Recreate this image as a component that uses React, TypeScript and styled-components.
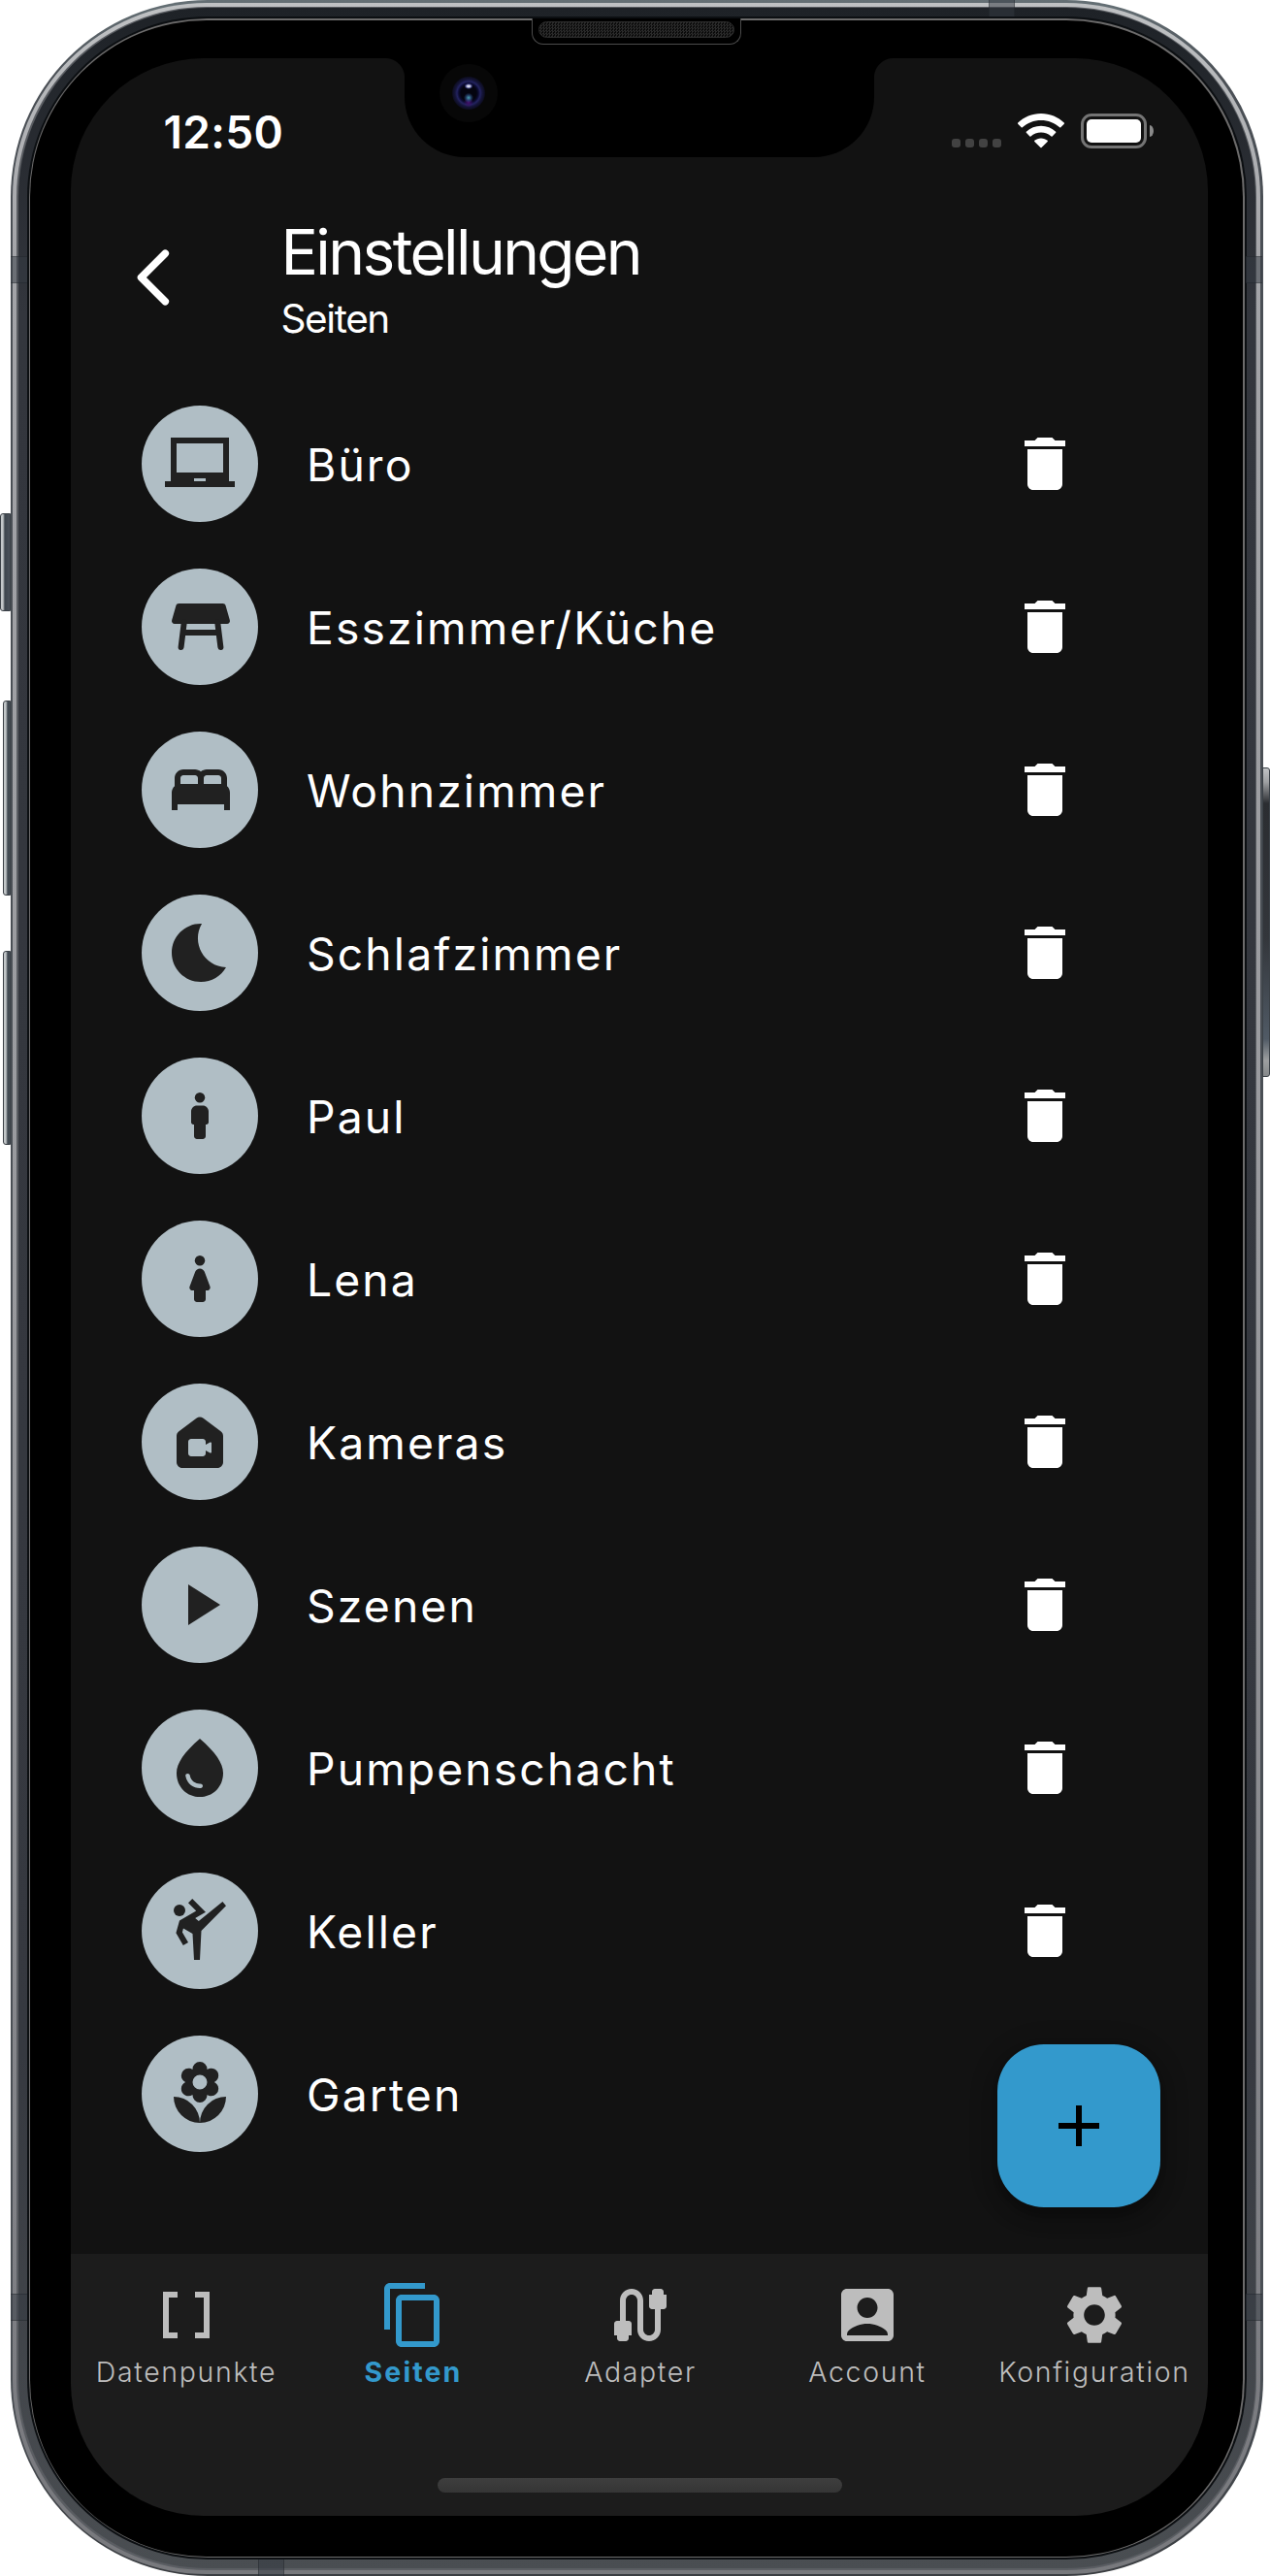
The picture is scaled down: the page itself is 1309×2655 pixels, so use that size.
import React from "react";
import styled, { createGlobalStyle, css } from "styled-components";
import type { IconType } from "react-icons";
import {
  MdAccountBox,
  MdAdd,
  MdBed,
  MdBedtime,
  MdCable,
  MdContentCopy,
  MdDataArray,
  MdDelete,
  MdLaptopChromebook,
  MdLocalFlorist,
  MdPlayArrow,
  MdSettings,
  MdSportsMartialArts,
  MdWaterDrop,
} from "react-icons/md";

const color = {
  screen: "#121212",
  bar: "#1c1c1c",
  text: "#ffffff",
  muted: "#bdbdbd",
  accent: "#3399cc",
  badge: "#b0bec5",
  glyph: "#212121",
};

const GlobalStyle = createGlobalStyle`
  * { box-sizing: border-box; }
  body {
    margin: 0;
    background: #fff;
    font-family: Inter, "Liberation Sans", sans-serif;
  }
`;

/* ---------- device ---------- */

const Stage = styled.div`
  position: relative;
  width: 1309px;
  height: 2655px;
  padding: 0 7.5px 0 10.5px;
  overflow: hidden;
`;

const Ring = styled.div<{ $size: number; $radius: number; $fill: string }>`
  height: 100%;
  padding: ${(p) => p.$size}px;
  border-radius: ${(p) => p.$radius}px;
  background: ${(p) => p.$fill};
`;

const Glass = styled.div`
  height: 100%;
  padding: 39.5px 36px 41.5px 42px;
  border-radius: 182px;
  background: #000;
`;

const Screen = styled.div`
  display: flex;
  flex-direction: column;
  width: 1172px;
  height: 2533px;
  padding: 0 1px;
  border-radius: 137px;
  overflow: hidden;
  background: linear-gradient(${color.screen} 2263px, ${color.bar} 2263px);
`;

const SideButton = styled.div<{ $side: "left" | "right"; $top: number; $height: number; $width: number }>`
  position: absolute;
  top: ${(p) => p.$top}px;
  ${(p) => p.$side}: ${(p) => (p.$side === "left" ? 11 - p.$width : 0)}px;
  width: ${(p) => p.$width}px;
  height: ${(p) => p.$height}px;
  border: 1px solid #3b4147;
  border-radius: ${(p) => (p.$side === "left" ? "3px 0 0 3px" : "0 3px 3px 0")};
  background: ${(p) =>
    p.$side === "left"
      ? "linear-gradient(to right, #c3c7c9 2px, #3d454d 4px, #4b525b)"
      : "linear-gradient(#c0c2c4, #9fa1a3 14px, #2b2d31 36px, #33363b 55%, #505a65 88%, #9d9fa0 95%, #85888a)"};
`;

const AntennaBand = styled.div<{ $x: number; $y: number; $upright?: boolean }>`
  position: absolute;
  left: ${(p) => p.$x}px;
  top: ${(p) => p.$y}px;
  width: ${(p) => (p.$upright ? 27 : 17)}px;
  height: ${(p) => (p.$upright ? 17 : 28)}px;
  background: rgba(52, 58, 66, 0.5);
  ${(p) =>
    p.$upright
      ? css`border-left: 1px solid rgba(20, 22, 26, 0.3); border-right: 1px solid rgba(20, 22, 26, 0.3);`
      : css`border-top: 1px solid rgba(20, 22, 26, 0.3); border-bottom: 1px solid rgba(20, 22, 26, 0.3);`}
`;

const Notch = styled.div`
  position: absolute;
  left: 417px;
  top: 58px;
  width: 484px;
  height: 104px;
  border-radius: 0 0 62px 62px;
  background: #000;

  &::before,
  &::after {
    content: "";
    position: absolute;
    top: 2px;
    width: 20px;
    height: 20px;
  }
  &::before {
    right: 100%;
    background: radial-gradient(circle at 0 100%, transparent 19.5px, #000 20.5px);
  }
  &::after {
    left: 100%;
    background: radial-gradient(circle at 100% 100%, transparent 19.5px, #000 20.5px);
  }
`;

const Camera = styled.div`
  position: absolute;
  left: 36px;
  top: 8px;
  display: grid;
  place-items: center;
  width: 60px;
  height: 60px;
  border-radius: 50%;
  background: #070707;
`;

const Lens = styled.div`
  width: 34px;
  height: 34px;
  border-radius: 50%;
  background:
    radial-gradient(ellipse 4.5px 3px at 50% 29%, #d5d7ee 30%, rgba(80, 84, 170, 0.6) 75%, transparent),
    radial-gradient(circle at 50% 64%, #4a9db0, rgba(50, 90, 150, 0.5) 3px, transparent 5px),
    radial-gradient(circle at 50% 78%, #47116f, transparent 5px),
    radial-gradient(circle, #04040f 8px, #0b0b30 10px, #23235f 12px, #15153a 14px, #0c0c1c 17px);
`;

const Earpiece = styled.div`
  position: absolute;
  left: 548px;
  top: 19px;
  width: 216px;
  height: 27px;
  padding: 3px 6px;
  border: 1px solid #4c4c4c;
  border-top: 0;
  border-radius: 0 0 12px 12px;
  background: #000;
`;

const Mesh = styled.div`
  height: 17px;
  border: 1px solid #2c2c2c;
  border-radius: 9px;
  background: repeating-conic-gradient(#2a2a2a 0 25%, #0b0b0b 0 50%) 0 0 / 3px 3px;
`;

/* ---------- status bar ---------- */

const StatusBar = styled.div`
  display: flex;
  align-items: center;
  justify-content: space-between;
  height: 150px;
  padding: 0 55px 0 94.5px;
  flex: none;
`;

const Clock = styled.span`
  padding-top: 1px;
  color: ${color.text};
  font-size: 46px;
  font-weight: 600;
  letter-spacing: 0.3px;
`;

const Indicators = styled.div`
  display: flex;
  align-items: flex-end;
  gap: 17px;
  height: 36px;
`;

const SignalDots = styled.div`
  display: flex;
  gap: 5px;
  padding-bottom: 1px;
`;

const SignalDot = styled.i`
  width: 9px;
  height: 9px;
  border-radius: 3px;
  background: #424242;
`;

const Battery = styled.div`
  display: flex;
  align-items: center;
  gap: 3px;
`;

const BatteryShell = styled.div`
  width: 68px;
  height: 36px;
  padding: 3px;
  border: 3px solid #747474;
  border-radius: 11px;
`;

const BatteryCharge = styled.div`
  height: 100%;
  border-radius: 5px;
  background: #fff;
`;

const BatteryNub = styled.div`
  width: 4px;
  height: 12px;
  border-radius: 0 4px 4px 0 / 0 6px 6px 0;
  background: #8a8a8a;
`;

/* ---------- header ---------- */

const Header = styled.header`
  display: flex;
  align-items: flex-start;
  gap: 96px;
  height: 184px;
  padding: 10px 0 0 47.5px;
  flex: none;
  color: ${color.text};
`;

const BackButton = styled.button`
  width: 72px;
  height: 72px;
  margin: 30px 0 0;
  padding: 0;
  border: 0;
  background: none;
  color: inherit;
`;

const Title = styled.h1`
  margin: 0;
  font-size: 64px;
  font-weight: 400;
  line-height: 80px;
  letter-spacing: -2.6px;
`;

const Subtitle = styled.p`
  margin: 0;
  font-size: 40.5px;
  line-height: 57px;
  letter-spacing: -1.4px;
`;

/* ---------- list ---------- */

const Content = styled.main`
  position: relative;
  height: 1929px;
  flex: none;
  overflow: hidden;
`;

const List = styled.ul`
  margin: 0;
  padding: 0;
  list-style: none;
`;

const Row = styled.li`
  display: flex;
  align-items: center;
  height: 168px;
  padding: 0 131px 0 72px;
`;

const Badge = styled.span<{ $shift: number }>`
  display: grid;
  place-items: center;
  width: 120px;
  height: 120px;
  padding-left: ${(p) => p.$shift * 2}px;
  border-radius: 50%;
  background: ${color.badge};
  color: ${color.glyph};
`;

const RowLabel = styled.span`
  flex: 1;
  padding: 2px 0 0 50px;
  color: ${color.text};
  font-size: 46.3px;
  letter-spacing: 2.1px;
`;

const DeleteButton = styled.button`
  width: 72px;
  height: 72px;
  padding: 0;
  border: 0;
  background: none;
  color: #fff;
`;

const Fab = styled.button`
  position: absolute;
  right: 48px;
  bottom: 48px;
  display: grid;
  place-items: center;
  width: 168px;
  height: 168px;
  padding: 0;
  border: 0;
  border-radius: 48px;
  background: ${color.accent};
  color: #000;
  box-shadow: 0 10px 16px rgba(0, 0, 0, 0.3), 0 4px 30px rgba(0, 0, 0, 0.2);
`;

/* ---------- bottom navigation ---------- */

const NavBar = styled.nav`
  display: grid;
  grid-template-columns: repeat(5, 1fr);
  height: 231px;
  padding-top: 27px;
  flex: none;
`;

const NavItem = styled.a<{ $active: boolean }>`
  display: flex;
  flex-direction: column;
  align-items: center;
  gap: 5px;
  padding-left: 1px;
  color: ${(p) => (p.$active ? color.accent : color.muted)};
  font-size: 28.5px;
  font-weight: ${(p) => (p.$active ? 700 : 300)};
  line-height: 36px;
  letter-spacing: ${(p) => (p.$active ? 2.1 : 1.65)}px;
  white-space: nowrap;
`;

const NavLabel = styled.span`
  padding-left: 1px;
`;

const HomeIndicator = styled.div`
  width: 417px;
  height: 15px;
  margin: 0 auto;
  border-radius: 8px;
  background: linear-gradient(#3e3e3e, #353535);
`;

/* ---------- drawings ---------- */

type GlyphProps = { size?: number };

const TableIcon = ({ size = 72 }: GlyphProps) => (
  <svg width={size} height={size} viewBox="0 0 24 24" fill="currentColor">
    <path d="M21.96 9.73l-1.43-5c-.12-.43-.51-.73-.96-.73H4.43c-.45 0-.84.3-.96.73l-1.43 5C1.86 10.36 2.34 11 3 11h18c.66 0 1.14-.64.96-1.27z" />
    <path d="M6.25 10.5L5.2 19M17.75 10.5L18.8 19" fill="none" stroke="currentColor" strokeWidth="2" strokeLinecap="round" />
    <path d="M6 13h12v2H6z" />
  </svg>
);

const BoyIcon = ({ size = 72 }: GlyphProps) => (
  <svg width={size} height={size} viewBox="0 0 24 24" fill="currentColor">
    <circle cx="12" cy="5.75" r="1.75" />
    <path d="M13 8.5h-2c-1.1 0-2 .9-2 2v3.75c0 .41.34.75.75.75H10v4c0 .55.45 1 1 1h2c.55 0 1-.45 1-1v-4h.25c.41 0 .75-.34.75-.75V10.5c0-1.1-.9-2-2-2z" />
  </svg>
);

const GirlIcon = ({ size = 72 }: GlyphProps) => (
  <svg width={size} height={size} viewBox="0 0 24 24" fill="currentColor">
    <circle cx="12" cy="5.75" r="1.75" />
    <path d="M13.6 9.6c-.25-.66-.9-1.1-1.6-1.1s-1.35.44-1.6 1.1L8.5 14.66C8.26 15.3 8.74 16 9.44 16H10v3c0 .55.45 1 1 1h2c.55 0 1-.45 1-1v-3h.56c.7 0 1.18-.7.94-1.34z" />
  </svg>
);

const CameraHouseIcon = ({ size = 72 }: GlyphProps) => (
  <svg width={size} height={size} viewBox="0 0 24 24" fill="currentColor" fillRule="evenodd">
    <path d="M10.8 3.9l-6 4.5C4.3 8.78 4 9.37 4 10v9c0 1.1.9 2 2 2h12c1.1 0 2-.9 2-2v-9c0-.63-.3-1.22-.8-1.6l-6-4.5c-.71-.53-1.69-.53-2.4 0zM8 12c0-.55.45-1 1-1h4c.55 0 1 .45 1 1v1l1.5-.8c.25-.1.5 0 .5.3v3c0 .3-.25.4-.5.3L14 15v1c0 .55-.45 1-1 1H9c-.55 0-1-.45-1-1z" />
  </svg>
);

const ChevronIcon = () => (
  <svg width="72" height="72" viewBox="0 0 72 72" fill="none">
    <path d="M48.3 11.2L23.5 36l24.8 24.8" stroke="currentColor" strokeWidth="7.6" strokeLinecap="round" strokeLinejoin="round" />
  </svg>
);

const WifiIcon = () => (
  <svg width="48" height="36" viewBox="0 0 48 36" fill="#fff">
    <path d="M24 0C33.3 0 41.7 3.6 47.8 9.6c.3.3.3.8 0 1.1L44.3 14.3c-.3.3-.8.3-1.1 0C38.1 9.5 31.4 6.9 24 6.9S9.900 9.500 4.800 14.300c-.3.3-.8.3-1.100 0L.2 10.700c-.3-.3-.3-.8 0-1.100C6.300 3.600 14.700 0 24 0z" />
    <path d="M24 12.7c5.8 0 11.2 2.2 15.2 6 .3.3.3.8 0 1.1l-3.600 3.600c-.3.3-.8.3-1.100 0-2.800-2.500-6.500-4-10.500-4s-7.700 1.500-10.500 4c-.3.3-.8.3-1.100 0l-3.600-3.600c-.3-.3-.3-.8 0-1.100 4-3.800 9.400-6 15.200-6z" />
    <path d="M24 25.4c2.6 0 4.900.9 6.700 2.400.3.3.3.8 0 1.100l-6.100 6.200c-.3.3-.9.3-1.200 0l-6.100-6.200c-.3-.3-.3-.8 0-1.100 1.800-1.500 4.100-2.400 6.700-2.400z" />
  </svg>
);

/* ---------- data ---------- */

type Page = { name: string; icon: IconType | React.FC<GlyphProps>; shift?: number };

const pages: Page[] = [
  { name: "Büro", icon: MdLaptopChromebook },
  { name: "Esszimmer/Küche", icon: TableIcon, shift: 1 },
  { name: "Wohnzimmer", icon: MdBed, shift: 1 },
  { name: "Schlafzimmer", icon: MdBedtime, shift: 1 },
  { name: "Paul", icon: BoyIcon },
  { name: "Lena", icon: GirlIcon },
  { name: "Kameras", icon: CameraHouseIcon },
  { name: "Szenen", icon: MdPlayArrow },
  { name: "Pumpenschacht", icon: MdWaterDrop },
  { name: "Keller", icon: MdSportsMartialArts },
  { name: "Garten", icon: MdLocalFlorist },
];

const tabs: { name: string; icon: IconType; active?: boolean }[] = [
  { name: "Datenpunkte", icon: MdDataArray },
  { name: "Seiten", icon: MdContentCopy, active: true },
  { name: "Adapter", icon: MdCable },
  { name: "Account", icon: MdAccountBox },
  { name: "Konfiguration", icon: MdSettings },
];

function PhoneScreen() {
  return (
    <Screen>
      <StatusBar>
        <Clock>12:50</Clock>
        <Indicators>
          <SignalDots>
            <SignalDot />
            <SignalDot />
            <SignalDot />
            <SignalDot />
          </SignalDots>
          <WifiIcon />
          <Battery>
            <BatteryShell>
              <BatteryCharge />
            </BatteryShell>
            <BatteryNub />
          </Battery>
        </Indicators>
      </StatusBar>
      <Header>
        <BackButton>
          <ChevronIcon />
        </BackButton>
        <div>
          <Title>Einstellungen</Title>
          <Subtitle>Seiten</Subtitle>
        </div>
      </Header>
      <Content>
        <List>
          {pages.map(({ name, icon: Icon, shift = 0 }) => (
            <Row key={name}>
              <Badge $shift={shift}>
                <Icon size={72} />
              </Badge>
              <RowLabel>{name}</RowLabel>
              <DeleteButton>
                <MdDelete size={72} />
              </DeleteButton>
            </Row>
          ))}
        </List>
        <Fab>
          <MdAdd size={72} />
        </Fab>
      </Content>
      <NavBar>
        {tabs.map(({ name, icon: Icon, active = false }) => (
          <NavItem key={name} $active={active}>
            <Icon size={72} />
            <NavLabel>{name}</NavLabel>
          </NavItem>
        ))}
      </NavBar>
      <HomeIndicator />
    </Screen>
  );
}

export default function App() {
  return (
    <>
      <GlobalStyle />
      <Stage>
        <SideButton $side="left" $top={529} $height={101} $width={11} />
        <SideButton $side="left" $top={722} $height={201} $width={8} />
        <SideButton $side="left" $top={980} $height={200} $width={8} />
        <SideButton $side="right" $top={791} $height={319} $width={8} />
        <Ring $size={2.5} $radius={203} $fill="linear-gradient(#657075, #4a4f55 3%, #4a4f55 92%, #3b3e42)">
          <Ring
            $size={4}
            $radius={200}
            $fill="linear-gradient(#bfc1c3, #a3a4a8 10%, #98999d 50%, #7d7e83 90%, #78797d)"
          >
            <Ring $size={1.5} $radius={196} $fill="#5a5d62">
              <Ring $size={9} $radius={195} $fill="linear-gradient(#1e2227, #33363d 12%, #363940 80%, #4a4e52)">
                <Ring $size={2} $radius={186} $fill="#0c0f12">
                  <Ring $size={1.5} $radius={184} $fill="#6c6b6b">
                    <Glass>
                      <PhoneScreen />
                    </Glass>
                  </Ring>
                </Ring>
              </Ring>
            </Ring>
          </Ring>
        </Ring>
        <AntennaBand $x={11} $y={264} />
        <AntennaBand $x={1284} $y={264} />
        <AntennaBand $x={11} $y={2364} />
        <AntennaBand $x={1284} $y={2364} />
        <AntennaBand $x={1019} $y={0} $upright />
        <AntennaBand $x={266} $y={2638} $upright />
        <Notch>
          <Camera>
            <Lens />
          </Camera>
        </Notch>
        <Earpiece>
          <Mesh />
        </Earpiece>
      </Stage>
    </>
  );
}
